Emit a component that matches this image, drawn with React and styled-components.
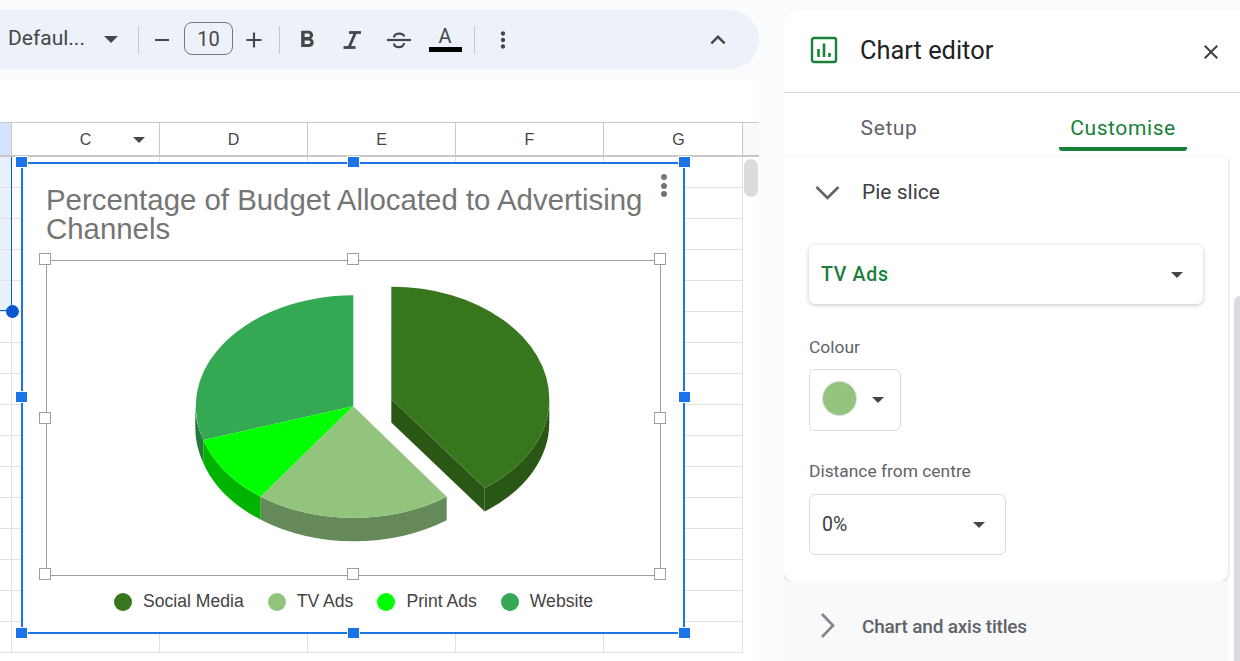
import React from 'react';
import styled, { createGlobalStyle } from 'styled-components';
import {
  MdAdd,
  MdClose,
  MdExpandLess,
  MdFormatBold,
  MdMoreVert,
  MdRemove,
} from 'react-icons/md';

const GlobalStyle = createGlobalStyle`
  html, body {
    margin: 0;
    padding: 0;
    width: 1240px;
    height: 661px;
    overflow: hidden;
    background: #f9fbfd;
    font-family: Roboto, "Liberation Sans", sans-serif;
  }
  * { box-sizing: border-box; }
`;

const Page = styled.div`
  display: flex;
  width: 1240px;
  height: 661px;
  gap: 25px;
`;

const Workspace = styled.div`
  width: 759px;
  display: flex;
  flex-direction: column;
  padding-top: 10px;
`;

const Toolbar = styled.div`
  height: 59px;
  display: flex;
  align-items: center;
  padding-left: 8px;
  background: #edf2fa;
  border-radius: 0 30px 30px 0;
  color: #444746;
`;

const FontName = styled.span`
  width: 88px;
  margin-bottom: 3px;
  font-size: 21px;
  color: #444746;
  white-space: nowrap;
`;

const Slot = styled.div`
  width: ${(p) => p.$w || 44}px;
  height: 36px;
  margin-left: ${(p) => p.$ml || 0}px;
  display: flex;
  align-items: center;
  justify-content: center;
  flex-direction: column;
  color: #444746;
`;

const EndSlot = styled(Slot)`
  margin-left: auto;
  margin-right: 19px;
`;

const Divider = styled.div`
  width: 1px;
  height: 28px;
  margin-left: ${(p) => p.$ml}px;
  background: #c7c7c7;
`;

const SizeBox = styled.div`
  width: 49px;
  height: 33px;
  margin-left: 6px;
  margin-bottom: 2px;
  border: 1px solid #747775;
  border-radius: 8px;
  display: flex;
  align-items: center;
  justify-content: center;
  font-size: 20px;
  color: #444746;
`;

const ColorLetter = styled.span`
  font-size: 20px;
  line-height: 19px;
  color: #444746;
`;

const ColorBar = styled.div`
  width: 33px;
  height: 5px;
  background: #000;
  margin-top: 1px;
`;

const Caret = styled.span`
  display: block;
  width: 0;
  height: 0;
  border-left: ${(p) => p.$size || 7}px solid transparent;
  border-right: ${(p) => p.$size || 7}px solid transparent;
  border-top: ${(p) => (p.$size ? p.$size : 7)}px solid #444746;
`;

const FormulaStrip = styled.div`
  height: 42px;
  margin-top: 11px;
  background: #fff;
`;

const Sheet = styled.div`
  position: relative;
  flex: 1;
  overflow: hidden;
  background: #fff;
`;

const ColumnHeader = styled.div`
  display: grid;
  grid-template-columns: 12px repeat(4, 148px) 139px 17px;
  height: 35px;
  border-top: 1px solid #c7c7c7;
  border-bottom: 2px solid #c7c7c7;
`;

const ColumnCell = styled.div`
  position: relative;
  display: flex;
  align-items: center;
  justify-content: center;
  padding-top: 1px;
  padding-left: ${(p) => p.$pad || 0}px;
  font-family: "Liberation Sans", Arial, sans-serif;
  font-size: 16px;
  color: #444746;
  border-right: 1px solid #c7c7c7;
  background: ${(p) => p.$bg || '#fff'};
`;

const HeaderCaret = styled.span`
  position: absolute;
  right: 14px;
  top: 14px;
`;

const Grid = styled.div`
  display: grid;
  grid-template-columns: 12px repeat(4, 148px) 139px 17px;
  grid-auto-rows: 31px;
`;

const GridCell = styled.div`
  border-right: 1px solid #e1e1e1;
  border-bottom: ${(p) => (p.$noRule ? 'none' : '1px solid #e1e1e1')};
  background: ${(p) => (p.$selected ? '#e8f0fe' : '#fff')};
`;

const SelectionEdge = styled.div`
  position: absolute;
  left: 0;
  top: 35px;
  width: 12px;
  height: 154px;
  border-right: 1px solid #0b57d0;
  border-bottom: 1px solid #0b57d0;
`;

const SelectionDot = styled.div`
  position: absolute;
  left: 6px;
  top: 183px;
  width: 13px;
  height: 13px;
  border-radius: 50%;
  background: #0b57d0;
`;

const SheetThumb = styled.div`
  position: absolute;
  left: 744px;
  top: 37px;
  width: 14px;
  height: 38px;
  border-radius: 7px;
  background: #dadce0;
`;

const Chart = styled.div`
  position: absolute;
  left: 21px;
  top: 40px;
  width: 664px;
  height: 472px;
  display: flex;
  flex-direction: column;
  background: #fff;
  border: 2px solid #1a73e8;
`;

const ChartTitle = styled.div`
  margin: 21px 0 0 23px;
  width: 625px;
  font-family: "Liberation Sans", Arial, sans-serif;
  font-size: 29.4px;
  line-height: 29px;
  color: #757575;
`;

const PlotArea = styled.div`
  position: relative;
  margin: 17px 0 0 23px;
  width: 615px;
  height: 316px;
  border: 1px solid #9e9e9e;
`;

const PieSvg = styled.svg`
  display: block;
  width: 613px;
  height: 314px;
`;

const Legend = styled.div`
  display: flex;
  align-items: center;
  justify-content: center;
  margin-top: 15px;
  padding-left: 1px;
  gap: 24px;
`;

const LegendItem = styled.div`
  display: flex;
  align-items: center;
  gap: 11px;
  font-family: "Liberation Sans", Arial, sans-serif;
  font-size: 17.6px;
  color: #444;
`;

const LegendDot = styled.span`
  width: 18px;
  height: 18px;
  border-radius: 50%;
  background: ${(p) => p.$color};
`;

const BlueHandle = styled.span`
  position: absolute;
  left: ${(p) => p.$x}px;
  top: ${(p) => p.$y}px;
  width: 11px;
  height: 10px;
  background: #1a73e8;
  box-shadow: 0 0 0 1px #fff;
`;

const PlotHandle = styled.span`
  position: absolute;
  left: ${(p) => p.$x}px;
  top: ${(p) => p.$y}px;
  width: 12px;
  height: 12px;
  background: #fff;
  border: 1px solid #9e9e9e;
`;

const ChartMenu = styled.span`
  position: absolute;
  right: 16px;
  top: 10px;
  display: flex;
  flex-direction: column;
  gap: 2.6px;
`;

const MenuDot = styled.span`
  width: 6px;
  height: 6px;
  border-radius: 50%;
  background: #757575;
`;

const Panel = styled.aside`
  position: relative;
  flex: 1;
  margin-top: 10px;
  display: flex;
  flex-direction: column;
  background: #fff;
  border-radius: 16px 0 0 0;
  overflow: hidden;
`;

const PanelHeader = styled.header`
  height: 83px;
  flex: none;
  display: flex;
  align-items: center;
  padding: 0 13px 2px 26px;
  border-bottom: 1px solid #dadce0;
`;

const PanelTitle = styled.h1`
  margin: 0 0 0 22px;
  font-size: 25.4px;
  font-weight: 400;
  color: #202124;
  flex: 1;
`;

const CloseButton = styled.div`
  width: 32px;
  height: 32px;
  display: flex;
  align-items: center;
  justify-content: center;
  color: #3c4043;
  margin-top: 4px;
`;

const Tabs = styled.nav`
  height: 64px;
  flex: none;
  display: flex;
  width: 444px;
`;

const Tab = styled.div`
  width: ${(p) => p.$w}px;
  margin-left: ${(p) => p.$ml}px;
  height: 58px;
  display: flex;
  align-items: center;
  justify-content: center;
  padding-top: ${(p) => (p.$active ? 16 : 12)}px;
  font-size: 21px;
  font-weight: 400;
  letter-spacing: 0.6px;
  color: ${(p) => (p.$active ? '#188038' : '#5f6368')};
  border-bottom: ${(p) => (p.$active ? '4px solid #188038' : 'none')};
  border-radius: 0 0 3px 3px;
`;

const OpenSection = styled.section`
  width: 444px;
  height: 424px;
  flex: none;
  background: #fff;
  border-radius: 0 0 8px 8px;
  box-shadow: 0 1px 3px rgba(60, 64, 67, 0.3);
  padding: 0 25px;
`;

const SectionHead = styled.div`
  display: flex;
  align-items: center;
  height: 70px;
  margin-left: 6px;
  font-size: 21px;
  color: #3c4043;
  gap: 22px;
`;

const ChevronBox = styled.svg`
  width: 25px;
  height: 25px;
  flex: none;
  fill: none;
  stroke: ${(p) => p.$color};
  stroke-width: 2.6;
`;

const SeriesSelect = styled.div`
  width: 394px;
  height: 59px;
  margin-top: 18px;
  padding: 0 20px 0 12px;
  display: flex;
  align-items: center;
  justify-content: space-between;
  border-radius: 6px;
  background: #fff;
  box-shadow: 0 1px 4px rgba(60, 64, 67, 0.3);
  font-size: 19.5px;
  font-weight: 500;
  letter-spacing: 0.7px;
  color: #188038;
`;

const FieldLabel = styled.div`
  margin-top: ${(p) => p.$mt}px;
  font-size: 17.4px;
  line-height: 22px;
  color: #5f6368;
`;

const ColourButton = styled.div`
  width: 92px;
  height: 62px;
  margin-top: 11px;
  padding: 0 16px 0 13px;
  display: flex;
  align-items: center;
  justify-content: space-between;
  border: 1px solid #dadce0;
  border-radius: 6px;
`;

const Swatch = styled.span`
  width: 33px;
  height: 33px;
  margin-top: -4px;
  border-radius: 50%;
  background: #93c47d;
  box-shadow: 0 0 0 1px #dadce0;
`;

const DistanceSelect = styled.div`
  width: 197px;
  height: 61px;
  margin-top: 12px;
  padding: 0 20px 0 12px;
  display: flex;
  align-items: center;
  justify-content: space-between;
  border: 1px solid #dadce0;
  border-radius: 6px;
  font-size: 19.5px;
  color: #3c4043;
`;

const ClosedSection = styled.section`
  width: 444px;
  flex: 1;
  display: flex;
  align-items: flex-start;
  padding: 32px 0 0 31px;
  gap: 22px;
  background: #f8f9fa;
  font-size: 19px;
  line-height: 27px;
  font-weight: 500;
  letter-spacing: -0.2px;
  color: #5f6368;
`;

const PanelThumb = styled.div`
  position: absolute;
  right: 0;
  top: 286px;
  bottom: 0;
  width: 6px;
  background: #dadce0;
  border-radius: 6px 0 0 0;
`;

const columns = ['C', 'D', 'E', 'F', 'G'];
const rowIds = Array.from({ length: 16 }, (_, i) => i);
const cellIds = Array.from({ length: 7 }, (_, i) => i);

const blueHandles = [
  [-7, -7], [325, -7], [656, -7],
  [-7, 228], [656, 228],
  [-7, 464], [325, 464], [656, 464],
];

const plotHandles = [
  [-8, -8], [300, -8], [607, -8],
  [-8, 151], [607, 151],
  [-8, 307], [300, 307], [607, 307],
];

const legendItems = [
  { label: 'Social Media', color: '#38761d' },
  { label: 'TV Ads', color: '#93c47d' },
  { label: 'Print Ads', color: '#00ff00' },
  { label: 'Website', color: '#34a853' },
];

// coordinates are page pixels, the viewBox maps them onto the plot area
const PieChart = () => (
  <PieSvg viewBox="47 261 613 314">
    <path d="M195.3 406.3A158 111 0 0 0 203.3 440v23A158 111 0 0 1 195.3 429.3Z" fill="#257a3b" />
    <path d="M203.3 440A158 111 0 0 0 260.7 496.7v23A158 111 0 0 1 203.3 463Z" fill="#00b300" />
    <path d="M260.7 496.7A158 111 0 0 0 446.7 496.7v23.5A158 111 0 0 1 260.7 519.7Z" fill="#66895a" />
    <path d="M353.3 406.3V295.3A158 111 0 0 0 203.3 440Z" fill="#34a853" />
    <path d="M353.3 406.3L203.3 440A158 111 0 0 0 260.7 496.7Z" fill="#00ff00" />
    <path d="M353.3 406.3L260.7 496.7A158 111 0 0 0 446.7 496.7Z" fill="#93c47d" />
    <path d="M391.3 399.3L484.7 488v23.5L391.3 422.5Z" fill="#2a5716" />
    <path d="M549.3 399.3A158 110 0 0 1 484.7 488v23.5A158 110 0 0 0 549.3 422.5Z" fill="#2a5716" />
    <path d="M391.3 399.3V286.7A158 112.6 0 0 1 549.3 399.3A158 110 0 0 1 484.7 488Z" fill="#38761d" />
  </PieSvg>
);

const ChartIcon = () => (
  <svg width="28" height="28" viewBox="0 0 28 28" fill="none">
    <rect x="2" y="2" width="24" height="24" rx="2" stroke="#188038" strokeWidth="2.4" />
    <path d="M8.5 13v8M14 7.5V21M19.5 17v4" stroke="#188038" strokeWidth="2.6" />
  </svg>
);

const ItalicIcon = () => (
  <svg width="28" height="28" viewBox="0 0 28 28" fill="none" stroke="currentColor" strokeWidth="2.8">
    <path d="M11 6.5h12" />
    <path d="M5.5 21.5h12" />
    <path d="M17.5 6.5l-6.5 15" />
  </svg>
);

const StrikeIcon = () => (
  <svg width="28" height="28" viewBox="0 0 28 28" fill="none" stroke="currentColor" strokeWidth="2.2">
    <path d="M2 14h24" />
    <path d="M9 11.5C9 6.5 19 6.5 19 10.5" />
    <path d="M9 17.5C9 22.5 19 22.5 19 17" />
  </svg>
);

const App = () => {
  return (
    <>
      <GlobalStyle />
      <Page>
        <Workspace>
          <Toolbar>
            <FontName>Defaul...</FontName>
            <Slot $w={30}><Caret /></Slot>
            <Divider $ml={12} />
            <Slot $w={32} $ml={7}><MdRemove size={24} /></Slot>
            <SizeBox>10</SizeBox>
            <Slot $w={31} $ml={5}><MdAdd size={26} /></Slot>
            <Divider $ml={10} />
            <Slot $ml={5}><MdFormatBold size={28} /></Slot>
            <Slot $ml={1}><ItalicIcon /></Slot>
            <Slot $ml={3}><StrikeIcon /></Slot>
            <Slot $ml={2}>
              <ColorLetter>A</ColorLetter>
              <ColorBar />
            </Slot>
            <Divider $ml={7} />
            <Slot $ml={6}><MdMoreVert size={26} /></Slot>
            <EndSlot><MdExpandLess size={30} /></EndSlot>
          </Toolbar>
          <FormulaStrip />
          <Sheet>
            <ColumnHeader>
              <ColumnCell $bg="#d3e3fd" />
              {columns.map((name) => (
                <ColumnCell key={name} $pad={name === 'G' ? 11 : 0}>
                  {name}
                  {name === 'C' && (
                    <HeaderCaret><Caret $size={6} /></HeaderCaret>
                  )}
                </ColumnCell>
              ))}
              <ColumnCell $bg="#f8f9fa" />
            </ColumnHeader>
            <Grid>
              {rowIds.map((row) =>
                cellIds.map((cell) => (
                  <GridCell
                    key={`${row}-${cell}`}
                    $selected={cell === 0 && row < 5}
                    $noRule={cell === 6}
                  />
                ))
              )}
            </Grid>
            <SelectionEdge />
            <SelectionDot />
            <SheetThumb />
            <Chart>
              <ChartTitle>Percentage of Budget Allocated to Advertising Channels</ChartTitle>
              <ChartMenu>
                <MenuDot />
                <MenuDot />
                <MenuDot />
              </ChartMenu>
              <PlotArea>
                <PieChart />
                {plotHandles.map(([x, y]) => (
                  <PlotHandle key={`${x}-${y}`} $x={x} $y={y} />
                ))}
              </PlotArea>
              <Legend>
                {legendItems.map((item) => (
                  <LegendItem key={item.label}>
                    <LegendDot $color={item.color} />
                    {item.label}
                  </LegendItem>
                ))}
              </Legend>
              {blueHandles.map(([x, y]) => (
                <BlueHandle key={`${x}-${y}`} $x={x} $y={y} />
              ))}
            </Chart>
          </Sheet>
        </Workspace>
        <Panel>
          <PanelHeader>
            <ChartIcon />
            <PanelTitle>Chart editor</PanelTitle>
            <CloseButton><MdClose size={24} /></CloseButton>
          </PanelHeader>
          <Tabs>
            <Tab $w={128} $ml={41}>Setup</Tab>
            <Tab $w={128} $ml={106} $active>Customise</Tab>
          </Tabs>
          <OpenSection>
            <SectionHead>
              <ChevronBox viewBox="0 0 25 25" $color="#5f6368">
                <path d="M1.5 7l11 11 11-11" />
              </ChevronBox>
              Pie slice
            </SectionHead>
            <SeriesSelect>
              TV Ads
              <Caret $size={6} />
            </SeriesSelect>
            <FieldLabel $mt={32}>Colour</FieldLabel>
            <ColourButton>
              <Swatch />
              <Caret $size={6} />
            </ColourButton>
            <FieldLabel $mt={29}>Distance from centre</FieldLabel>
            <DistanceSelect>
              0%
              <Caret $size={6} />
            </DistanceSelect>
          </OpenSection>
          <ClosedSection>
            <ChevronBox viewBox="0 0 25 25" $color="#80868b">
              <path d="M7 1l11 11.5L7 24" />
            </ChevronBox>
            Chart and axis titles
          </ClosedSection>
          <PanelThumb />
        </Panel>
      </Page>
    </>
  );
};

export default App;
